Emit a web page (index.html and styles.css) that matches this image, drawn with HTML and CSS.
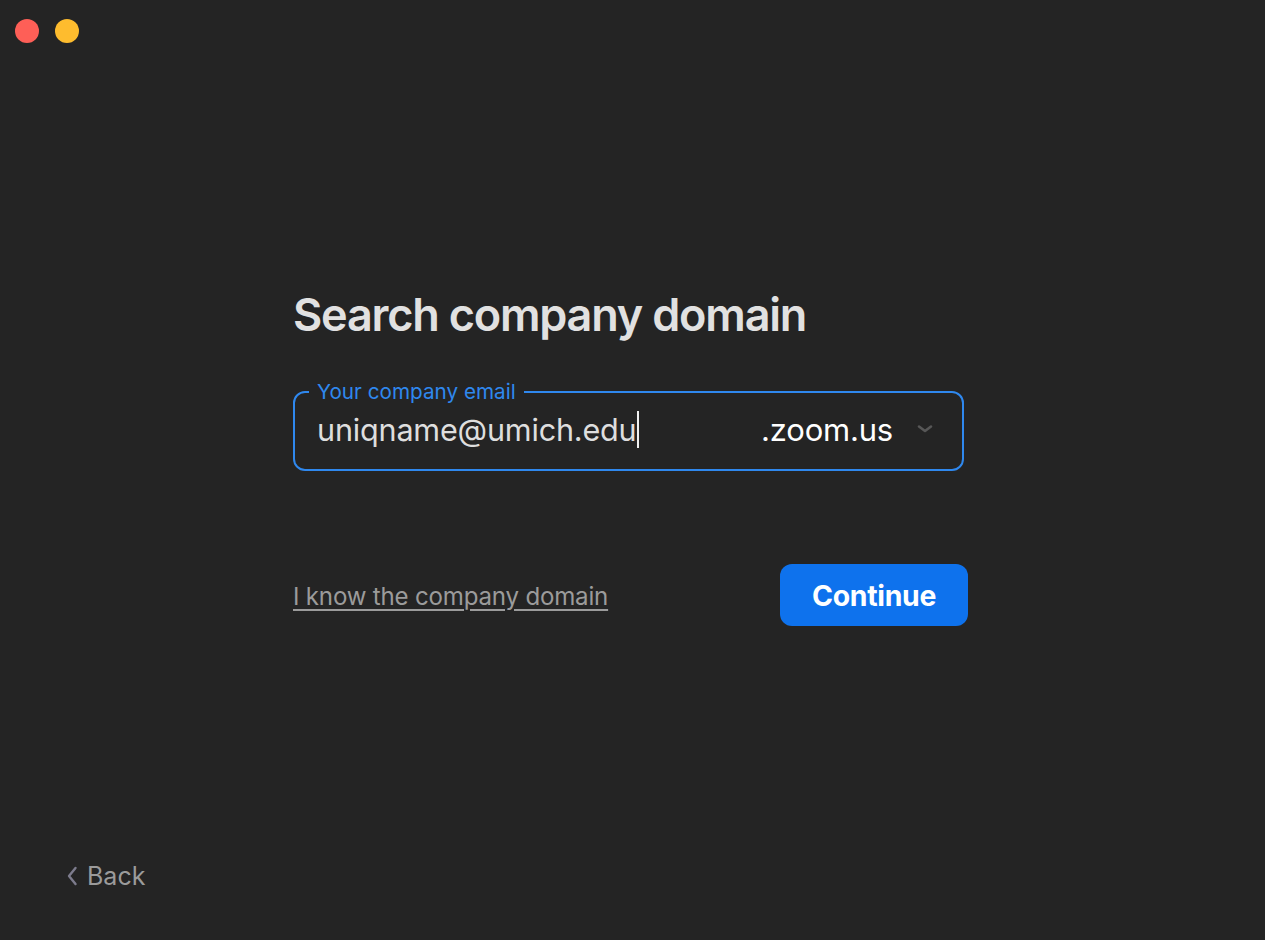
FILE: index.html
```html
<!DOCTYPE html>
<html>
<head>
<meta charset="utf-8">
<link rel="stylesheet" href="styles.css">
</head>
<body>
<div class="window">
  <div class="titlebar">
    <span class="dot red"></span>
    <span class="dot yellow"></span>
  </div>
  <main class="main">
    <h1 class="title">Search company domain</h1>
    <fieldset class="field">
      <legend class="legend">Your company email</legend>
      <div class="field-row">
        <span class="email">uniqname@umich.edu</span><span class="caret"></span>
        <span class="suffix">.zoom.us</span>
        <svg class="chev" width="16" height="10" viewBox="0 0 16 10"><path d="M2 2.5 L8 7 L14 2.5" fill="none" stroke="#575757" stroke-width="2.6" stroke-linecap="round" stroke-linejoin="round"/></svg>
      </div>
    </fieldset>
    <div class="actions">
      <a class="link" href="#">I know the company domain</a>
      <button class="btn">Continue</button>
    </div>
  </main>
  <div class="footer">
    <a class="back" href="#"><svg width="12" height="20" viewBox="0 0 12 20"><path d="M9.5 2 L3 10 L9.5 18" fill="none" stroke="#7c7b8c" stroke-width="2.4" stroke-linecap="round" stroke-linejoin="round"/></svg><span>Back</span></a>
  </div>
</div>
</body>
</html>
```
FILE: styles.css
```css
html, body {
  margin: 0;
  padding: 0;
  background: #242424;
}
body {
  font-family: Inter, "Open Sans", "Liberation Sans", sans-serif;
}
.window {
  height: 940px;
  display: flex;
  flex-direction: column;
  box-sizing: border-box;
}
.titlebar {
  display: flex;
  gap: 16px;
  padding: 19px 15px 0;
  height: 24px;
}
.dot {
  width: 24px;
  height: 24px;
  border-radius: 50%;
  display: block;
}
.red { background: #fe5f57; }
.yellow { background: #febc2e; }
.main {
  padding: 247px 0 0 293px;
  width: 675px;
  flex: 1;
}
.title {
  margin: 0;
  font-size: 45px;
  font-weight: 600;
  color: #e1e1e1;
  letter-spacing: -1.2px;
  line-height: 50px;
}
.field {
  margin: 42px 0 0;
  border: 2px solid #2f88ee;
  border-radius: 12px;
  padding: 0 22px 0 22px;
  height: 89px;
  width: 671px;
  box-sizing: border-box;
  min-width: 0;
}
.legend {
  color: #2f88ee;
  font-size: 20.7px;
  padding: 0 8px 0 8px;
  margin-left: -8px;
  line-height: 20px;
}
.field-row {
  display: flex;
  align-items: center;
  height: 54px;
  margin-top: 0;
}
.email {
  color: #dedede;
  font-size: 30.6px;
  font-weight: 400;
  letter-spacing: -0.2px;
}
.caret {
  width: 2px;
  height: 37px;
  background: #f0f0f0;
  margin-left: 0;
}
.suffix {
  margin-left: auto;
  color: #ffffff;
  font-size: 31px;
  letter-spacing: -0.2px;
}
.chev {
  margin-left: 24px;
  margin-right: 7px;
}
.actions {
  display: flex;
  justify-content: space-between;
  align-items: center;
  margin-top: 93px;
  width: 675px;
}
.link {
  color: #9b9b9b;
  font-size: 24.1px;
  text-decoration: underline;
  text-underline-offset: 4px;
  text-decoration-thickness: 2px;
  letter-spacing: -0.2px;
  margin-top: 2px;
}
.btn {
  background: #0e72ed;
  border: none;
  border-radius: 12px;
  color: #ffffff;
  font-family: inherit;
  font-size: 28.4px;
  font-weight: 700;
  width: 188px;
  height: 62px;
  letter-spacing: -0.3px;
}
.footer {
  padding: 0 0 49px 66px;
}
.back {
  display: inline-flex;
  align-items: center;
  gap: 9px;
  color: #9b9b9b;
  font-size: 25px;
  text-decoration: none;
}
```
